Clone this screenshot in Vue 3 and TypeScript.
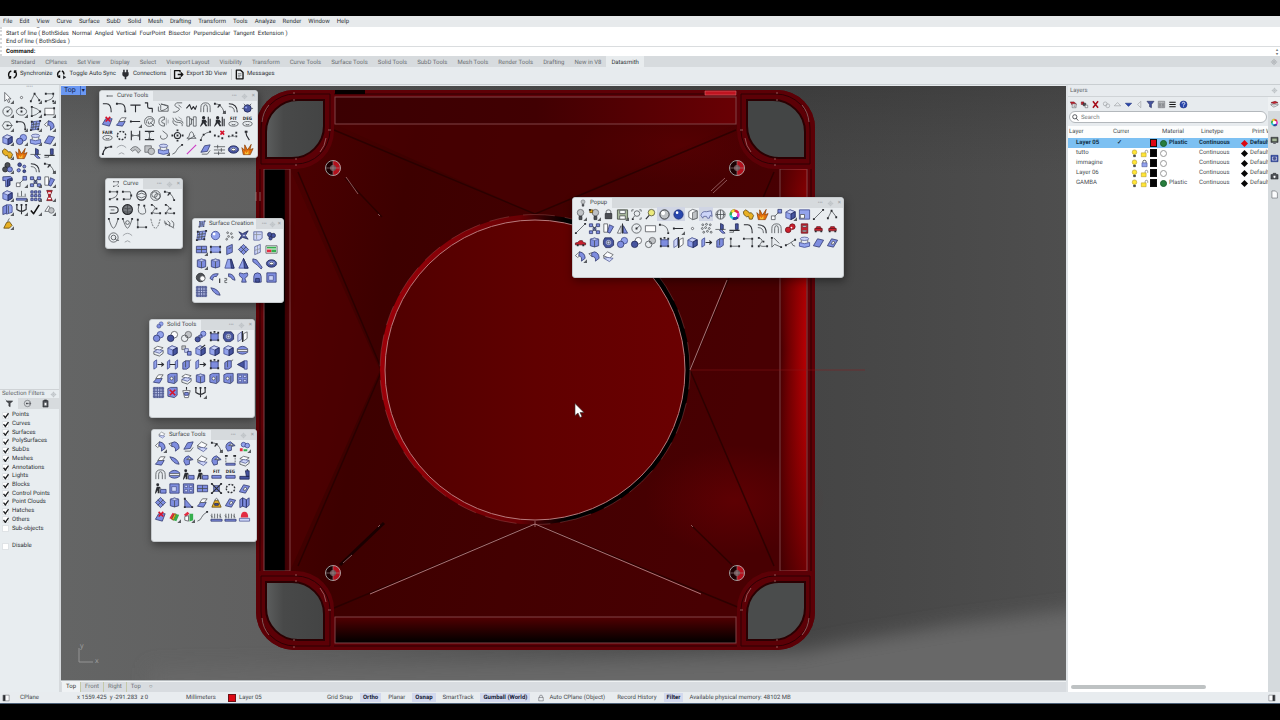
<script setup lang="ts">
import { ref } from 'vue'

interface Part { kind: string; d: string }
interface ToolWindow { id: string; title: string; glyph: string; tools: string[] }
interface Layer { name: string; current: boolean; locked: boolean; color: string; material: string }

const c = (x: number, y: number, r: number): string =>
  `M${x - r} ${y}a${r} ${r} 0 1 0 ${2 * r} 0a${r} ${r} 0 1 0 ${-2 * r} 0`
const dots = (...p: number[]): string => {
  let out = ''
  for (let i = 0; i < p.length; i += 2) out += `M${p[i] - 1} ${p[i + 1] - 1}h2v2h-2z`
  return out
}
const cube = 's:M2 4.5L6.5 2L12 4V10L7.5 12.5L2 10.5Z|l:M2 4.5L6.5 2L12 4L7.5 6.5Z|d:M7.5 6.5L12 4V10L7.5 12.5Z'

// Each glyph is a list of "kind:path" parts on a 14 unit square.
const glyphs: Record<string, string> = {
  arrow: 'w:M4 1.5V11L6.2 9L8 12.5L9.5 11.8L8 8.5H10.8Z',
  point: `w:${c(7, 7, 1.2)}`,
  zig: `k:M2 11L6 3L11 9.5|f:${dots(2, 11, 6, 3, 11, 10)}`,
  cpts: `k:M3 3H10Q12 3 11 6T6 10L3 11|f:${dots(3, 3, 11, 3, 3, 11, 11, 11)}`,
  circle: `k:${c(7, 7, 5)}M7 7L10.5 4|f:${dots(7, 7)}`,
  ellipse: `k:M1.5 7a5.5 4 0 1 0 11 0a5.5 4 0 1 0-11 0|f:${dots(7, 7, 7, 3)}`,
  arc3: `k:M3 2Q10 4 12 7Q8 11 3 12Z|f:${dots(3, 2, 12, 7, 3, 12)}`,
  rect: `w:M2 3.5H12V10.5H2Z|f:${dots(2, 10.5, 12, 3.5)}`,
  polygon: `k:M4 3H9L12 7L9 11H4L1.5 7ZM7 7H12|f:${dots(7, 7)}`,
  fillet: 'h:M2 3H6Q11 3 11 12',
  filletn: `h:M2 3H6Q11 3 11 10|f:${dots(2, 3, 11, 11)}`,
  tee: 'h:M1.5 4.5H12.5M7 4.5V12',
  step: 'h:M2 2H5V6Q5 8 7 8H10V12.5',
  loop: 'k:M2 3Q5 4 4 8T9 9T7 4T12 5M1.5 6V11H12V5',
  scurve: 'k:M12 2H6Q2 5 7 7T5 12H2M8 4L11 7',
  zag: 'h:M1.5 8L5 4L7 9L9 6L11 9L12.5 5',
  arch: 'k:M2 12V7Q2 2 7 2T12 7V12M5 12V7Q5 4 7 4T9 7V12',
  arcn: `k:M2 3Q9 3 12 12|f:${dots(2, 3, 7, 4.5, 12, 12)}|h:M5 7L8 4`,
  offset: 'h:M2 3Q11 3 11 12|k:M2 6Q8 6 8 12',
  bug: `d:${c(7, 8, 4)}|s:${c(5.5, 7, 1.6)}|k:M3 3L5 5M11 3L9 5M1 8H3M11 8H13`,
  surfx: 'b:M1.5 10L5 4H12L9 12Z|rh:M5 2L10 7M10 2L5 7',
  surf2: 'b:M1.5 11L5 7H11L8 12Z|w:M4 7L7 3H12L9 7Z',
  plane: 'b:M1.5 10.5L6 3L12.5 4.5L8 12Z',
  planeh: 'b:M1.5 10.5L6 3L12.5 4.5L8 12Z|w:M5.5 8.5L7.5 5.5L9.5 6.5L8 9Z',
  lineh: `h:M2 7H12|f:${dots(2, 7)}`,
  swirl: `k:${c(7, 7, 5.3)}M4 9Q3 4 8 4T9 8T6 7M8 8L12 12`,
  halfd: 'k:M8 2Q2 2 2 7T8 12V9Q5 9 5 7T8 5Z|g:M10 3V11M12 5V9',
  coil: 'k:M2 3Q3 8 8 8T12 12M5 3Q5 6 9 6T13 9M2 6Q2 11 7 11|g:M8 2L12 5',
  brk: 'k:M5 2H2V12H5ZM5 4H7V10H5M12 2H9V12H12ZM9 5H7',
  run: `f:${c(5, 3, 1.8)}M3 5H7L9 8H7L9 12H7L5 9L2 12.5H1L3 8Z|h:M10 2V12M12 4V12`,
  fit: 't:FIT|k:M2 9.5a5 2.5 0 1 0 10 0a5 2.5 0 1 0-10 0M5 9.5a2 1 0 1 0 4 0',
  deg: 't:DEG|k:M2 9.5a5 2.5 0 1 0 10 0a5 2.5 0 1 0-10 0M5 9.5a2 1 0 1 0 4 0',
  fair: 't:FAIR|k:M2 9.5a5 2.5 0 1 0 10 0a5 2.5 0 1 0-10 0M5 9.5a2 1 0 1 0 4 0',
  fitb: 't:FIT|b:M2 8H12V11H2Z',
  degb: 't:DEG|b:M2 8H12V11H2Z',
  ring: `hd:${c(7, 7, 4.5)}`,
  hh: 'h:M2.5 2V12M11.5 2V12|k:M3 7H11M4.5 5.5L3 7L4.5 8.5M9.5 5.5L11 7L9.5 8.5',
  ii: 'h:M2 2.5H12M2 11.5H12|k:M7 3V11M5.5 4.5L7 3L8.5 4.5M5.5 9.5L7 11L8.5 9.5',
  hook: 'k:M6 2L11 6Q12 10 7 11Q3 11 4 7',
  target: `h:${c(7, 7, 3.3)}|f:${dots(7, 7, 7, 1.5, 7, 12.5, 1.5, 7, 12.5, 7)}`,
  bell: 'k:M2 10Q5 9 5 5Q7 1 9 5Q9 9 12 10ZM3 12L11 7',
  ncurve: `k:M2 12Q3 5 12 3|f:${dots(2, 12, 5, 6, 12, 3)}`,
  redx: `rh:M8 2L12 6M12 2L8 6|f:${dots(2, 7, 6, 8, 10, 10)}`,
  ndots: `f:${dots(2, 8, 6, 7, 10, 8, 10, 4)}|g:M2 8L10 8`,
  ess: 'h:M5 2L6 7L9 12|f:M4 2h3v2h-3z',
  arcn2: `h:M2 12Q3 4 11 4|f:${dots(2, 12, 5, 5, 11, 4)}`,
  garc: 'g:M2 5Q7 0 12 5M4 12Q7 9 10 12',
  fan: 'gf:M1.5 7Q7 0 12.5 8L10 11Q7 5 4 9Z',
  shapes: `gf:M2 3H9V10H2Z|gf:${c(9, 9, 3.5)}`,
  cyl: 'l:M2.5 3a4.5 1.8 0 1 0 9 0a4.5 1.8 0 1 0-9 0|s:M1.5 7Q7 9.5 12.5 7V11Q7 13.5 1.5 11Z|k:M3.5 4.5V7M10.5 4.5V7',
  curve: 'k:M1.5 12Q5 11 6 8T12 2|f:M11 1h2v2h-2z',
  mline: 'm:M2 12L12 2',
  surfp: 'b:M2 10L6 3L12 2L9 9Z|k:M3 12H9L12 8',
  lines: 'k:M1 4H13M1 7.5H13M1 11H13M5 2V6M9 5.5V9.5M6 9V13',
  torus: 'd:M1.5 7a5.5 4 0 1 0 11 0a5.5 4 0 1 0-11 0|s:M3 6.5a4 2.4 0 1 0 8 0a4 2.4 0 1 0-8 0|w:M4.8 7a2.2 1.3 0 1 0 4.4 0a2.2 1.3 0 1 0-4.4 0',
  fire: 'o:M2.5 12.5L1 5L4 8L4 2L7 7.5L11 1.5L9.5 7.5L13 6L10 12.5Z|ya:M4.5 12L4.5 9L6 11L8 8L8 12Z',
  rtop: `k:M2 3H10Q12 7 10 11H3|f:${dots(2, 3, 3, 11, 11, 7)}`,
  cring: `h:${c(7, 7, 5)}|k:M3 6Q7 3 11 6M3 8Q7 11 11 8`,
  grings: `k:${c(7, 7, 5.3)}${c(6, 6, 3)}${c(9, 8, 3)}`,
  sphdk: `gm:${c(7, 7, 5.3)}|k:M2 5Q7 8 12 5M2 9Q7 11 12 9M7 2V12`,
  opend: 'h:M2 4H8Q12 4 12 7.5T8 11H3|k:M4 7.5H8',
  copen: 'k:M4 3Q2 12 8 12T10 4|f:M3 1h2v2h-2zM9 2h2v2h-2z',
  zign: `k:M3 2Q9 4 5 8T12 11|f:${dots(3, 2, 8, 6, 3, 11, 12, 11)}`,
  vee: `k:M2 2Q5 12 7 12T12 2|f:${dots(2, 2, 12, 2)}`,
  veec: `k:M2 2Q5 12 7 12T12 2${c(7, 6, 2)}|f:${dots(2, 2, 12, 2)}`,
  ell: `k:M3 2V11H12|f:${dots(3, 11, 12, 11, 3, 3)}`,
  udash: 'kd:M2 2Q4 12 7 12T12 2',
  spring: 'k:M1 4Q5 6 3 9M5 4Q9 6 7 10M9 4Q13 6 11 11M1 6L12 12',
  spiral: `k:${c(7, 7, 5)}${c(7, 7, 2.5)}M9 7Q9 11 13 10`,
  patch: `s:M3 3L12 2L10 11L2 12Z|k:M5 3L4 12M8 3L7 11M3 6L11 5M2 9L11 8|f:${dots(2, 12, 12, 2, 3, 3, 10, 11)}`,
  ball: `s:${c(7, 7, 4.5)}|wf:${c(5.5, 5.5, 1.5)}`,
  scatter: `gf:${c(5, 4, 1)}${c(9, 5, 1)}${c(6, 8, 1)}${c(10, 9, 1)}${c(4, 11, 1)}`,
  mesh: 'd:M2 3L6 5L12 2L9 7L12 11L6 9L2 12L5 7Z|l:M6 6H9V8H6Z',
  lgrid: 'l:M3 3H12V10L9 12H3Z|g:M3 6H11M6 3V11',
  blobs: `d:${c(5, 6, 2.3)}|d:${c(9, 7, 2.3)}|d:${c(6, 10, 1.8)}`,
  pl: 'b:M1.5 3.5H12.5V10.5H1.5Z|k:M1.5 7H12.5M7 3.5V10.5',
  pln: `s:M2 4H12V10H2Z|f:${dots(2, 4, 12, 4, 2, 10, 12, 10)}`,
  page: 'b:M4 4L10 1.5V10L4 12.5Z|k:M6 6L9 5',
  diam: 'b:M7 1.5L12.5 7L7 12.5L1.5 7Z|k:M4 4L10 10M10 4L4 10',
  lpage: 'l:M4 4L10 1.5V10L4 12.5Z|g:M7 3V12M4 8L10 6',
  pic: 'w:M1 3H13V11H1Z|r:M2 7H7V10H2Z|n:M2 4H12V6H2ZM7 7H12V10H7Z',
  box: cube,
  cylb: 'b:M2.5 3.5Q7 1 11.5 3.5V10.5Q7 13 2.5 10.5Z|l:M2.5 3.5Q7 6 11.5 3.5Q7 1 2.5 3.5Z|k:M7 5V12',
  frus: 's:M5 2.5H9L12 12H2Z|d:M8 2.5H9L12 12H9Z',
  cone: 's:M7 1.5L12 12H2Z|d:M7 1.5L12 12H8Z',
  pipe: 'b:M2 2L6 3L12 11L11 13L7 9L2 5Z',
  tord: `gd:${c(6, 7, 4.6)}|w:${c(8, 8, 2.8)}`,
  sw1: 'b:M1 8Q3 2 10 3L8 6Q4 5 4 10Z|h:M11.5 8V13',
  sw2: 'b:M6 3Q12 3 13 10L10 9Q9 6 6 6Z|k:M1.5 8H4V10H2V12.5H4.5',
  vase: 'b:M3 2Q7 4 11 2Q13 5 8.5 8L10 12H5L6 8Q1 5 3 2Z',
  dome: 'b:M3 12V6Q3 2 7 2T11 6V12Z|d:M5 12V8H9V12Z',
  frame: 'b:M2 2H12V12H2Z|l:M4 5H9V10H4Z',
  hatch: 'l:M1.5 1.5H12.5V12.5H1.5Z|hb:M1 3H13M1 5.7H13M1 8.4H13M1 11H13M3 1V13M5.7 1V13M8.4 1V13M11 1V13',
  leaf: 'b:M2 3Q10 4 12 11Q6 11 2 3Z',
  union: `s:${c(9, 5, 3.5)}|b:${c(5, 9, 3.5)}`,
  diff: `w:${c(9, 5, 3.5)}|d:${c(5, 9, 3.5)}`,
  inter: `gf:${c(9, 5, 3.5)}|k:${c(5, 9, 3.5)}`,
  split: `s:${c(10, 4, 2.8)}|d:${c(4, 10, 2.8)}|b:M5 6L8 5L9 8L6 9Z`,
  rbox: `d:M3 2H10L12.5 5V10L9 12.5H4L1.5 9V5Z|l:${c(7, 7, 3)}|k:${c(7, 7, 1.5)}`,
  mir: 'l:M2 5L6 2V10L2 12.5Z|w:M8 4L12 2V9L8 12Z|h:M7 1V13',
  slabs: 'w:M2 5L6 2.5L12 4L8 7Z|l:M2 8L6 6L12 7L8 10Z|k:M2 8V11L8 13L12 10V7',
  cubes: 'gf:M2 2H6V6H2Z|l:M5 5H9V9H5Z|b:M8 8H12V12H8Z',
  boxa: cube + '|h:M7 5L12 1',
  disc: 'b:M1.5 5Q7 0 12.5 5V9Q7 13 1.5 9Z|w:M1.5 6H12.5V8H1.5Z',
  ext: 's:M2 4L5 2V10L2 12Z|h:M6 7H12.5M10 5L12.5 7L10 9',
  ext2: 's:M1.5 4L4 2V10L1.5 12Z|s:M10 4L12.5 2V10L10 12Z|h:M4 7H10',
  ext3: 'b:M3 5L6 3H10V10L7 12H3Z|k:M6 3V10M10 3L12 2',
  boxn: `b:M3 4H11V11H3Z|f:${dots(3, 3, 11, 3, 3, 11, 11, 11, 7, 2)}`,
  cut: 'd:M1.5 7L9 3V11Z|s:M9 3H12V12H9Z',
  hole: `b:M2 3L5 1.5H12V10L9 12.5L2 11Z|w:${c(6, 7, 1.6)}|k:M9.5 4V12`,
  fr2: 'b:M1.5 2H12.5V12H1.5Z|l:M3 3.5H6V6H3ZM8 3.5H11V6H8ZM3 8H6V10.5H3ZM8 8H11V10.5H8Z',
  boxx: 'b:M2 3L5 1.5H12V10L9 12.5L2 11Z|rh:M4 4L10 10M10 4L4 10',
  cup: 'w:M3 5H11L9 12.5H5Z|h:M7 1V4|b:M5 7H9V10H5Z',
  branch: 'h:M7 2V12M2 3V7Q5 9 7 9M12 3V7Q9 9 7 9|f:M1 1h2v2h-2zM6 1h2v2h-2zM11 1h2v2h-2z',
  bend: 'w:M1.5 6L6 2L9 4L4 8Z|b:M6 2Q12 3 12 9L8 12Q9 7 5 6Z',
  bend2: 'b:M4 3L7 2Q12 3 12 9L8 12Q9 7 4 7Z|k:M1 4L4 3M1 4L4 7',
  bend3: 'w:M1.5 6L6 2L12 5L8 9Z|l:M2 9L6 8L12 9L8 12.5Z|k:M2 6V9',
  bend4: 'b:M2 8Q2 3 7 2L12 6L8 7L8 11L4 12Z|w:M5 6L8 4L10 6Z',
  rgblob: `s:${c(6, 5, 2.5)}|s:${c(10, 6, 2.5)}|r:M2 9H5V12H2Z|n:M6 10H10V12H6Z`,
  gate: 'b:M2 10H12V12H2Z|kd:M2 9V2M12 9V2|f:M1 1h3v2h-3zM10 1h3v2h-3z',
  runb: `f:${c(4, 3, 1.6)}M3 5H6L8 7H6L6 12H4L4 9L2 12.5H1L2 8Z|b:M7 8H13V12H7Z`,
  tbl: 'h:M10 1V5|d:M2 9H12V12H2ZM8 3H12V9H9Z',
  xn: `b:M4 4H10V10H4Z|h:M2 2L12 12M12 2L2 12|f:${dots(2, 2, 12, 2, 2, 12, 12, 12)}`,
  tri: 'b:M3 3L11 12H3Z|f:M2 2h2v2h-2zM2 11h2v2h-2zM10 11h2v2h-2z',
  lampb: 'y:M2 12L5 5H9L12 12Z|k:M5 5Q7 0 9 5|d:M5 8H9V10H5Z',
  fold: 'b:M2 4L5 2V11L2 12.5ZM5 2L9 4V12.5L5 11ZM9 4L12 2V10L9 12.5Z',
  rain: 'r:M1.5 9L5 3L7 4L4 10Z|y:M4 10L7 4L9 4.5L6 11Z|n:M6 11L9 4.5L12 5L9 12Z',
  rgbox: 'r:M2 5L6 2L8 4L4 7Z|n:M8 4H12V11L8 12.5Z|w:M3 7L7 6V12L3 11Z',
  comb: 'b:M1 10H13V12H1Z|k:M2 4V9M5 4V9M8 4V9M11 4V9M1 6L3 8M10 6L12 8',
  sun: 'r:M3 8Q3 2 7 2T11 8Z|l:M1.5 9H12.5V12H1.5Z',
  puzzle: 'y:M1.5 4L4 2L7 4L8 5.5L10 5L12.5 8L11 12H8L7 9L5 9.5L2 7Z',
  trim: 'd:M7 1.5L10 3V8H7Z|k:M1.5 8H12.5|b:M8 8L12 12H9L6 9Z',
  trim2: 'd:M8 2H11V8H8Z|h:M1.5 9H12.5|k:M1.5 11H6V9',
  venn: `gd:${c(7, 4.5, 2.8)}|gd:${c(4.5, 9, 2.8)}|b:${c(9.5, 9, 2.8)}`,
  bdots: `d:${c(5, 4, 2)}|b:${c(10, 6, 1.6)}|b:${c(4, 10, 1.8)}|d:${c(10, 11, 1.6)}`,
  tt: 'b:M2 2L10 1.5L12 3V6H9.5V11L7 12.5H5V6H2Z|d:M9.5 4H12V6H9.5V11L7 12.5V5Z',
  scale: 'w:M1.5 8.5H5.5V12.5H1.5Z|b:M8.5 1.5H12.5V5.5H8.5Z|k:M5 9L9 5',
  clus: 'b:M1.5 2H5V5H1.5ZM9 2H12.5V5H9ZM5.5 6H8.5V9H5.5ZM1.5 9.5H5V12.5H1.5ZM9 9.5H12.5V12.5H9Z|k:M5 4L9 10M9 4L5 10',
  pages: 'w:M2 2H6V11H2Z|b:M8 3L12.5 5L8.5 12L6 11Z',
  align: 'b:M1.5 10H12.5V12H1.5Z|k:M3 8V4M7 8V2M11 8V5|g:M2 8H12',
  arr: 'b:M2 2h2.5v2.5h-2.5zM6 2h2.5v2.5h-2.5zM10 2h2.5v2.5h-2.5zM2 6h2.5v2.5h-2.5zM6 6h2.5v2.5h-2.5zM10 6h2.5v2.5h-2.5zM2 10h2.5v2.5h-2.5zM6 10h2.5v2.5h-2.5zM10 10h2.5v2.5h-2.5z',
  hour: 'rd:M4 1.5H10L8 6.5V8L10 12.5H4L6 8V6.5Z|wf:M5.5 3.5H8.5V5H5.5ZM5.5 9.5H8.5V11H5.5Z',
  book: 'b:M2 4L6 2V11L2 12.5Z|s:M6 2H11L12 4V10L6 12Z|k:M8 3V11',
  check: 'hk:M2 8L5 11.5L11 2',
  cones: `w:M6 3L10 9H2Z|gf:${c(9, 8, 3)}`,
  gbell: 'y:M3 12L6 6L9 5L12 9L9 12Z|k:M7 5L9 1.5',
  bulb: `gf:${c(7, 5, 3.5)}|gd:M5.5 9H8.5V12.5H5.5Z`,
  bulby: `gf:${c(8, 5, 3.5)}|gd:M6.5 9H9.5V12.5H6.5Z|y:M2 2H5V5H2Z|f:M1 1h2v2h-2z`,
  ybulb: `yb:${c(7, 5, 3.6)}|gd:M5.5 9.5H8.5V12H5.5Z`,
  lock: 'k:M4.5 6V4Q4.5 2 7 2T9.5 4V6|gd:M3.5 6H10.5V11.5H3.5Z',
  olock: 'k:M4.5 6V4Q4.5 2 7 2T9.5 4V6M3 6H11V12H3Z',
  block: 'h:M4.5 6V4Q4.5 2 7 2T9.5 4V6|s:M3 6H11V12H3Z',
  unlock: 'k:M8 6V4Q8 2 10 2T12 4V6|yb:M2 6H9.5V12H2Z',
  save: 'sg:M1.5 2H12.5V12H1.5Z|w:M4 2.5H10V6H4ZM4 8.5H10V12H4Z',
  zext: `k:${c(7.5, 6, 3)}M5 8.5L3 11M2 4V2H4M10 2H12V4M12 10V12H10|f:${dots(3, 12)}`,
  zoom: `yl:${c(8, 5, 3.5)}|h:M5.5 8L2 12`,
  gsph: `gf:${c(7, 7, 5)}|wf:${c(5.5, 5.5, 2.2)}|k:${c(7, 7, 5)}`,
  bsph: `dn:${c(7, 7, 5)}|wf:${c(5.5, 5, 1.4)}`,
  ghost: 'w:M3 4L7 1.5L12 3V11L7 12.5L3 10Z|gf:M7 5L12 3V11L7 12.5Z',
  whale: 'l:M1 8Q2 3 7 4L12 3L13 9L11 8L10 11H8L7 9H4L3 11Z',
  globe: `k:${c(7, 7, 5)}M2 7H12M7 2V12M4.5 3Q2.5 7 4.5 11M9.5 3Q11.5 7 9.5 11`,
  wheel: 'r:M7 1.5A5.5 5.5 0 0 1 12 5L7 7Z|m2:M12 5A5.5 5.5 0 0 1 11 11L7 7Z|dn:M11 11A5.5 5.5 0 0 1 5 12L7 7Z|cy:M5 12A5.5 5.5 0 0 1 1.5 8L7 7Z|n:M1.5 8A5.5 5.5 0 0 1 3 3.5L7 7Z|yb:M3 3.5A5.5 5.5 0 0 1 7 1.5L7 7Z|wf:' + c(7, 7, 2.8),
  sframe: 's:M1.5 2H12.5V12H1.5Z|w:M2.5 7H7V11H2.5Z',
  line: `k:M2 12L12 2|f:${dots(2, 12, 12, 2)}`,
  mirr: 'w:M1.5 12L5.5 4V12Z|b:M8 4L12.5 12H8Z|h:M7 1.5V12.5',
  rects: 'w:M1.5 4H12.5V10.5H1.5Z',
  arcs: `k:M2 3Q10 3 11 11|f:${dots(2, 3, 11, 12)}`,
  cloud: 'k:' + c(3, 3, 1) + c(7, 2.5, 1) + c(11, 3, 1) + c(2.5, 7, 1) + c(6, 6, 1) + c(10, 7, 1) + c(4, 11, 1) + c(8, 10, 1) + c(12, 11, 1),
  rblob: `rd:${c(9, 5, 3)}|rd:${c(4.5, 8.5, 3)}|wf:${c(8, 6, 1)}`,
  rcan: 'rd:M3.5 2H10.5V12H3.5Z|w:M5 4H9V5.5H5ZM5 9H9V10.5H5Z',
  car: 'rd:M5 5H9L10 7H4Z|rd:M3 7H11V9.5H3Z|f:M3 9.5h2v1.5h-2zM9 9.5h2v1.5h-2z',
  car2: 'rd:M1.5 7.5L4 7L6 5H9L10 7L12.5 7.5V9.5H1.5Z|f:M3 9h2v2h-2zM9 9h2v2h-2z',
  curb: `k:M2 2V12L5 9L12 12M4 2L10 8|f:${dots(2, 2, 12, 12)}`,
  tee3: `k:M2 10L6 8L12 4M8 7Q9 11 12 11|f:${dots(2, 10, 12, 4)}`,
  stepn: `k:M2 3H11V11|f:${dots(2, 3, 11, 3, 11, 11)}`,
  newl: 'rd:M2 3H8L11 6V8H5Z|w:M5 6H11V12H5Z|k:M7 8H10M7 10H10',
  newl2: 'rd:M2 3H6V7H2Z|gd:M5 5H9V9H5Z|w:M8 8H12V12H8Z',
  xx: 'rb:M3 2L11 12M11 2L3 12',
  gcopy: `g:${c(5, 6, 3)}${c(9, 9, 3)}`,
  up: 'g:M2 9H12L7 4Z',
  down: 'dn:M2 5H12L7 10Z',
  left: 'g:M9 2V12L4 7Z',
  funnel: 'd:M1.5 2H12.5L8.5 7V12L5.5 10.5V7Z',
  table: 'gf:M2 2H12V12H2Z|w:M3.5 5H6V7H3.5ZM8 5H10.5V7H8ZM3.5 8.5H6V10.5H3.5ZM8 8.5H10.5V10.5H8Z',
  menu: 'hk:M2 3.5H12M2 7H12M2 10.5H12',
  help: `dn:${c(7, 7, 5.5)}|wl:M5 5.5Q5 3.5 7 3.5T9 5.5Q9 7 7 7.5V8.5M7 10V11`,
  layers: 'rd:M1.5 4L8 2L12.5 4L6 6Z|w:M1.5 6L6 8L12.5 6V8L6 11L1.5 8Z',
  monitor: 'gd:M1.5 2H12.5V10H1.5Z|sg:M3 3.5H11V8.5H3Z|f:M5 11h4v1h-4z',
  panel: 'dn:M1.5 2H12.5V12H1.5Z|l:M3 4H11V10.5H3Z|d:' + c(7, 7, 2),
  camera: `gd:M1.5 4H4L5 2H9L10 4H12.5V11H1.5Z|w:${c(7, 7.5, 2.2)}`,
  doc: 'w:M3 1.5H8.5L11.5 4.5V12.5H3Z',
  side: 'w:M1.5 2H12.5V12H1.5Z|f:M2 2h4v10h-4z',
  sideR: 'w:M1.5 2H12.5V12H1.5Z|f:M8 2h4v10h-4z',
  sync: 'hk:M5.5 2.5Q2 4 2 7.5Q2 9.5 4 11M2 11.5H4.5V9M8.5 11.5Q12 10 12 6.5Q12 4.5 10 3M12 2.5H9.5V5',
  auto: 'hk:M5.5 2.5Q2 4 2 7Q2 9.5 4 10.5M4.5 8V11.5M7.5 2.5Q10.5 4 10 7|f:M9 8l4 2.5l-4 2.5z',
  plug: 'f:M4 1h2v3h2v-3h2v3h1v4l-2 2h-1v3h-2v-3h-1l-2-2v-4h1z',
  exp: 'hk:M9 4V2H2V12H9V10M6 7H12.5M10 4.5L12.5 7L10 9.5',
  msg: 'hk:M3 1.5H8.5L11.5 4.5V12.5H3Z|k:M5 6H9.5M5 8H9.5M5 10H8',
  gear: `g:${c(7, 7, 3.5)}${c(7, 7, 1.3)}M7 1.5V3M7 11V12.5M1.5 7H3M11 7H12.5`,
  flt: 'gd:M2 3H12L8 7V12L6 11V7Z|k:M1 1L3 3',
  plus: `k:${c(7, 7, 5)}M5 7H12M9 5L12 7L9 9|f:${dots(6, 7)}`,
  clip: 'gd:M3 2.5H11V12.5H3Z|w:M5 5.5H9V10.5H5Z|f:M5 1h4v2h-4z'
}

const parts = (name: string): Part[] => {
  const marked = name.endsWith('+')
  const source = glyphs[marked ? name.slice(0, -1) : name] ?? ''
  const list = source.split('|').map((s) => {
    const at = s.indexOf(':')
    return { kind: s.slice(0, at), d: s.slice(at + 1) }
  })
  if (marked) list.push({ kind: 'more', d: 'M14 14h-4l4-4z' })
  return list
}

const row = (s: string): string[] => s.trim().split(/\s+/)

const menus = ['File', 'Edit', 'View', 'Curve', 'Surface', 'SubD', 'Solid', 'Mesh', 'Drafting', 'Transform', 'Tools', 'Analyze', 'Render', 'Window', 'Help']
const tabs = ['Standard', 'CPlanes', 'Set View', 'Display', 'Select', 'Viewport Layout', 'Visibility', 'Transform', 'Curve Tools', 'Surface Tools', 'Solid Tools', 'SubD Tools', 'Mesh Tools', 'Render Tools', 'Drafting', 'New in V8', 'Datasmith']
const activeTab = ref('Datasmith')
const actions = [
  { label: 'Synchronize', glyph: 'sync', sep: false },
  { label: 'Toggle Auto Sync', glyph: 'auto', sep: false },
  { label: 'Connections', glyph: 'plug', sep: true },
  { label: 'Export 3D View', glyph: 'exp', sep: true },
  { label: 'Messages', glyph: 'msg', sep: false }
]

const palette = row(`arrow+ point zig+ cpts+ circle+ ellipse+ arc3+ rect+ polygon+ filletn+ patch+ bend+
  box+ union+ cyl+ plane+ puzzle+ fire trim trim2 venn+ bdots offset arcn+ tt scale+ clus+ pages+
  box+ align+ arr+ hour+ book+ branch+ check+ cones+ gbell+`)

const windows: ToolWindow[] = [
  { id: 'curve-tools', title: 'Curve Tools', glyph: 'lineh', tools: row(`fillet filletn tee step loop scurve zag arch arcn+ offset bug
    surfx surf2 lineh+ swirl halfd coil brk run run fit deg
    fair ring hh ii hook target bell ncurve redx ndots ess
    arcn2 garc fan shapes cyl+ curve mline surfp lines torus fire`) },
  { id: 'curve', title: 'Curve', glyph: 'cpts', tools: row(`cpts rtop cring grings arcn opend sphdk copen zign zign
    vee veec ell udash spring spiral garc`) },
  { id: 'surface-creation', title: 'Surface Creation', glyph: 'patch', tools: row(`patch ball scatter mesh lgrid blobs
    pl+ pln page diam lpage pic cylb+ cylb frus cone pipe torus tord sw1 sw2 vase dome frame hatch leaf`) },
  { id: 'solid-tools', title: 'Solid Tools', glyph: 'union', tools: row(`union diff inter split boxn rbox mir
    slabs box cubes boxa box box disc ext ext2 ext3 ext boxn ext3 cut
    surf2 hole slabs cylb hole hole fr2 hatch boxx cup branch+`) },
  { id: 'surface-tools', title: 'Surface Tools', glyph: 'bend3', tools: row(`bend+ bend2 surfp bend3 arcn+ bend4 rgblob+
    surf2 leaf bend4 bend3 bend4 gate slabs arch disc runb runb fitb degb tbl
    runb frame fr2 pl xn ring planeh diam cylb tri surf2 lampb planeh fold
    surfx rain+ rgbox+ curve comb comb sun`) },
  { id: 'popup', title: 'Popup', glyph: 'bulb', tools: row(`bulb+ bulby+ lock save+ zext zoom gsph bsph ghost whale globe wheel puzzle fire scale box+ sframe line zig
    line clus pages mirr circle rects arcs lineh+ point cloud trim trim2 fillet offset arch rblob rcan car car
    car2 cylb rbox union diff inter boxn mir box ext ext3 ell stepn zign curb tee3 cyl plane planeh
    bend+ bend2 bend3`) }
]

const filters = ref(['Points', 'Curves', 'Surfaces', 'PolySurfaces', 'SubDs', 'Meshes', 'Annotations', 'Lights', 'Blocks', 'Control Points', 'Point Clouds', 'Hatches', 'Others', 'Sub-objects']
  .map((label) => ({ label, on: label !== 'Sub-objects' })))
const disabled = ref(false)

const layerTools = row('newl newl2 xx gcopy up down left funnel table menu help')
const sideTools = row('layers wheel monitor panel camera doc')
const layers: Layer[] = [
  { name: 'Layer 05', current: true, locked: false, color: 'red', material: 'Plastic' },
  { name: 'tutto', current: false, locked: false, color: 'black', material: '' },
  { name: 'immagine', current: false, locked: true, color: 'black', material: '' },
  { name: 'Layer 06', current: false, locked: false, color: 'black', material: '' },
  { name: 'GAMBA', current: false, locked: false, color: 'black', material: 'Plastic' }
]
const views = ['Top', 'Front', 'Right', 'Top']
const search = ref('')
const command = ref('')

const Glyph = (props: { name: string }) => {
  return h('svg', { viewBox: '0 0 14 14', class: 'glyph', 'aria-hidden': 'true' }, parts(props.name).map((p) =>
    p.kind === 't'
      ? h('text', { x: 7, y: 5.5, class: 'gt' }, p.d)
      : h('path', { d: p.d, class: 'g-' + p.kind })))
}
Glyph.props = ['name']
</script>

<script lang="ts">
import { h } from 'vue'
</script>

<template>
  <div class="app">
    <nav class="menubar" aria-label="Main menu">
      <button v-for="m in menus" :key="m" type="button">{{ m }}</button>
    </nav>

    <section class="command">
      <div class="log">
        <p>Command: _Line</p>
        <p>Start of line ( BothSides&nbsp; Normal&nbsp; Angled&nbsp; Vertical&nbsp; FourPoint&nbsp; Bisector&nbsp; Perpendicular&nbsp; Tangent&nbsp; Extension )</p>
        <p>End of line ( BothSides )</p>
      </div>
      <div class="prompt">
        <label for="command">Command:</label>
        <input id="command" v-model="command" type="text">
        <span class="spin">▴<br>▾</span>
      </div>
    </section>

    <nav class="tabs" aria-label="Toolbars">
      <button v-for="t in tabs" :key="t" type="button" :class="{ on: t === activeTab }" @click="activeTab = t">{{ t }}</button>
      <span class="grow"></span>
      <Glyph name="gear" />
    </nav>

    <div class="actions">
      <button v-for="a in actions" :key="a.label" type="button" :class="{ sep: a.sep }">
        <Glyph :name="a.glyph" /><span>{{ a.label }}</span>
      </button>
    </div>

    <main class="work">
      <aside class="left">
        <div class="grip">••••</div>
        <div class="palette">
          <button v-for="(t, i) in palette" :key="i" type="button" :aria-label="t"><Glyph :name="t" /></button>
        </div>
        <section class="filters">
          <header><h2>Selection Filters</h2><Glyph name="gear" /></header>
          <div class="ftabs">
            <button type="button" class="on" aria-label="Filter"><Glyph name="flt" /></button>
            <button type="button" aria-label="Snap"><Glyph name="plus" /></button>
            <button type="button" aria-label="Clipboard"><Glyph name="clip" /></button>
          </div>
          <div class="flist">
            <label v-for="f in filters" :key="f.label"><input v-model="f.on" type="checkbox">{{ f.label }}</label>
          </div>
          <label class="disable"><input v-model="disabled" type="checkbox">Disable</label>
        </section>
      </aside>

      <section class="center">
        <div class="viewport">
          <svg class="scene" viewBox="61 86 1005 594" preserveAspectRatio="xMinYMin slice" role="img" aria-label="Model view">
            <defs>
              <linearGradient id="bg"><stop offset="0" stop-color="#646565" /><stop offset=".2" stop-color="#606060" /><stop offset=".74" stop-color="#454545" /><stop offset=".84" stop-color="#484848" /><stop offset="1" stop-color="#4e4e4e" /></linearGradient>
              <linearGradient id="topshade" x2="0" y2="1"><stop offset="0" stop-color="#222" stop-opacity=".25" /><stop offset="1" stop-color="#333" stop-opacity="0" /></linearGradient>
              <linearGradient id="plate" x2="1" y2=".2"><stop offset="0" stop-color="#4c0001" /><stop offset=".25" stop-color="#3d0000" /><stop offset=".6" stop-color="#430001" /><stop offset="1" stop-color="#480002" /></linearGradient>
              <linearGradient id="disk"><stop offset="0" stop-color="#500000" /><stop offset=".5" stop-color="#600000" /><stop offset="1" stop-color="#6a0001" /></linearGradient>
              <linearGradient id="rim"><stop offset="0" stop-color="#9c0008" /><stop offset=".45" stop-color="#690004" /><stop offset=".6" stop-color="#000" /><stop offset="1" stop-color="#000" /></linearGradient>
              <linearGradient id="rightbar"><stop offset="0" stop-color="#430001" /><stop offset=".3" stop-color="#6c0002" /><stop offset=".95" stop-color="#b50003" /><stop offset="1" stop-color="#700004" /></linearGradient>
              <linearGradient id="rightfade" x2="0" y2="1"><stop offset="0" stop-color="#500002" stop-opacity=".65" /><stop offset=".45" stop-color="#900" stop-opacity="0" /><stop offset="1" stop-color="#400002" stop-opacity=".6" /></linearGradient>
              <linearGradient id="topbar"><stop offset="0" stop-color="#3b0002" /><stop offset=".5" stop-color="#410002" /><stop offset="1" stop-color="#690004" /></linearGradient>
              <linearGradient id="botbar" x2="0" y2="1"><stop offset="0" stop-color="#520002" /><stop offset=".4" stop-color="#300001" /><stop offset="1" stop-color="#000" /></linearGradient>
              <linearGradient id="leftbar"><stop offset="0" stop-color="#000" /><stop offset=".78" stop-color="#000" /><stop offset=".82" stop-color="#3b0003" /><stop offset="1" stop-color="#4c0003" /></linearGradient>
              <linearGradient id="hole"><stop offset="0" stop-color="#5c5e5e" /><stop offset=".3" stop-color="#484949" /><stop offset="1" stop-color="#434444" /></linearGradient>
              <radialGradient id="gloss"><stop offset="0" stop-color="#7d0004" stop-opacity=".4" /><stop offset="1" stop-color="#7d0004" stop-opacity="0" /></radialGradient>
              <filter id="soft" x="-20%" y="-60%" width="140%" height="220%"><feGaussianBlur stdDeviation="9" /></filter>
              <g id="corner">
                <path d="M256 169V128A38 38 0 0 1 294 90H334V131A38 38 0 0 1 296 169Z" fill="#5c0006" />
                <path d="M261 164V129A34 34 0 0 1 295 94H330V131A34 34 0 0 1 296 164Z" class="seam" />
                <path d="M266 158V132A32 32 0 0 1 298 100H324V126A32 32 0 0 1 292 158Z" stroke="#2a0002" stroke-width="2" />
                <path d="M262 122Q263 112 269 105M326 138Q325 146 320 152M294 92V94M294 99V101M296 158V160M296 164V166M328 130H331" class="hint" />
              </g>
              <g id="screw">
                <circle r="8" fill="#1b0002" /><path d="M0-8A8 8 0 0 1 0 8Z" fill="#b3101c" />
                <circle r="7.500" fill="none" stroke="#a39a9a" stroke-width="1" /><circle r="3" fill="#6c5557" />
                <path d="M-7 0H7M0-7V7" stroke="#a38c8e" stroke-width=".6" />
              </g>
            </defs>
            <rect x="61" y="86" width="1005" height="594" fill="url(#bg)" />
            <rect x="61" y="86" width="1005" height="90" fill="url(#topshade)" />
            <path d="M150 668L560 660L800 652L850 642L950 625L1090 607V730H150Z" fill="#676868" filter="url(#soft)" />
            <rect x="256" y="90" width="559" height="560" rx="38" fill="#5e0006" />
            <rect x="260" y="94" width="551" height="552" rx="34" class="seam" />
            <path d="M290 169L334 124H736L780 169V571L736 617H334L290 571Z" fill="url(#plate)" />
            <path d="M334 124H736L535 214Z" fill="#4b0002" opacity=".55" />
            <path d="M290 169V571L380 370Z" fill="#590002" opacity=".45" />
            <ellipse cx="735" cy="500" rx="90" ry="55" fill="url(#gloss)" />
            <ellipse cx="680" cy="145" rx="100" ry="40" fill="url(#gloss)" opacity=".6" />
            <g class="crease">
              <path d="M334 130L535 214L736 130M298 172L382 370L298 566M334 608L535 524L740 608M774 172L690 370L774 566" />
              <path d="M345 178L382 217M692 526L732 565" />
            </g>
            <path d="M340 565L384 523" stroke="#1a0001" stroke-width="3" />
            <g class="edge">
              <rect x="335" y="97" width="401" height="27" fill="url(#topbar)" />
              <rect x="335" y="617" width="401" height="26" fill="url(#botbar)" />
              <rect x="264" y="169" width="26" height="402" fill="url(#leftbar)" />
              <rect x="780" y="169" width="27" height="402" fill="url(#rightbar)" />
            </g>
            <rect x="781" y="170" width="25" height="400" fill="url(#rightfade)" />
            <path d="M335 90h30v4h-30z" fill="#060000" /><path d="M705 91h31v4h-31z" fill="#c01420" stroke="#d4666b" stroke-width=".6" />
            <g fill="url(#hole)"><use href="#corner" /></g>
            <g fill="#434545"><use href="#corner" transform="matrix(-1 0 0 1 1071 0)" /></g>
            <g fill="url(#hole)"><use href="#corner" transform="matrix(1 0 0 -1 0 740)" /></g>
            <g fill="#4a4c4c"><use href="#corner" transform="matrix(-1 0 0 -1 1071 740)" /></g>
            <use href="#screw" x="333" y="168" /><use href="#screw" x="737" y="168" />
            <use href="#screw" x="333" y="573" /><use href="#screw" x="737" y="573" />
            <circle cx="535" cy="369.500" r="155" fill="url(#rim)" />
            <circle cx="535" cy="369.500" r="155" fill="none" stroke="#955" stroke-width=".6" stroke-dasharray="20 14 32 10" opacity=".7" />
            <circle cx="535" cy="370" r="150" fill="url(#disk)" stroke="#b87a7c" stroke-width="1" />
            <path class="pink" d="M370 594L535 524L701 594M690 370L727 280" />
            <path class="hint" d="M346 177L358 194M711 191L725 178M713 193L727 180M343 563L352 555M378 214l2 2M378 527l2-2M691 525l2 2M535 521v6M256 192v9M260 192v9" />
            <path d="M690 370H865" stroke="#8d161b" stroke-width=".8" opacity=".6" />
            <path d="M79 648V662H93" fill="none" stroke="#949494" stroke-width="1" />
            <text x="80" y="648" class="axis">y</text><text x="95" y="663" class="axis">x</text>
            <path d="M575 403.500V415.500L578 413L580 417.500L582 416.500L580 412.500H584Z" fill="#fff" stroke="#333" stroke-width=".6" />
          </svg>

          <div class="viewname"><button type="button">Top</button><button type="button" aria-label="View menu">▾</button></div>

          <section v-for="w in windows" :key="w.id" class="win" :class="w.id">
            <header>
              <h3><Glyph :name="w.glyph" />{{ w.title }}</h3>
              <span class="dots">•••</span><Glyph name="gear" /><button type="button" aria-label="Close">×</button>
            </header>
            <div class="tools">
              <button v-for="(t, i) in w.tools" :key="i" type="button" :aria-label="t" :class="{ lit: ['gsph', 'bsph', 'whale'].includes(t) }"><Glyph :name="t" /></button>
            </div>
          </section>
        </div>
        <nav class="views" aria-label="Views">
          <button v-for="(v, i) in views" :key="i" type="button" :class="{ on: i === 0 }">{{ v }}</button>
          <button type="button" aria-label="Add view">○</button>
        </nav>
      </section>

      <aside class="layers">
        <header><h2>Layers</h2><Glyph name="gear" /></header>
        <div class="lbody">
          <div class="lmain">
            <div class="ltools"><button v-for="t in layerTools" :key="t" type="button" :aria-label="t"><Glyph :name="t" /></button></div>
            <label class="search">
              <svg viewBox="0 0 10 10" aria-hidden="true"><circle cx="4" cy="4" r="3" /><path d="M6 6L9 9.500" /></svg>
              <input v-model="search" type="search" placeholder="Search" aria-label="Search">
            </label>
            <div class="list">
              <table>
                <colgroup><col class="c1"><col class="c2"><col class="c3"><col class="c3"><col class="c3"><col class="c4"><col class="c5"><col class="c6"></colgroup>
                <thead>
                  <tr><th>Layer</th><th>Current</th><th></th><th></th><th></th><th>Material</th><th>Linetype</th><th>Print Width</th></tr>
                </thead>
                <tbody>
                  <tr v-for="l in layers" :key="l.name" :class="{ current: l.current }">
                    <td class="name">{{ l.name }}</td>
                    <td class="tick"><template v-if="l.current">✓</template></td>
                    <td><Glyph v-if="!l.current" name="ybulb" /></td>
                    <td><Glyph v-if="!l.current" :name="l.locked ? 'block' : 'unlock'" /></td>
                    <td><i class="swatch" :class="l.color"></i></td>
                    <td><span class="mat"><i :class="{ solid: l.material }"></i>{{ l.material }}</span></td>
                    <td>Continuous</td>
                    <td><span class="pw"><i :class="l.color"></i>Default</span></td>
                  </tr>
                </tbody>
              </table>
              <div class="hscroll"></div>
            </div>
          </div>
          <nav class="strip" aria-label="Panels"><button v-for="t in sideTools" :key="t" type="button" :aria-label="t"><Glyph :name="t" /></button></nav>
        </div>
      </aside>
    </main>

    <footer class="status">
      <button type="button" class="edgebtn" aria-label="Left sidebar"><Glyph name="side" /></button>
      <span class="cplane">CPlane</span>
      <span class="coords">x 1559.425&nbsp; y -291.283&nbsp; z 0</span>
      <span class="units">Millimeters</span>
      <span class="cur"><i></i>Layer 05</span>
      <button type="button">Grid Snap</button>
      <button type="button" class="on">Ortho</button>
      <button type="button">Planar</button>
      <button type="button" class="on">Osnap</button>
      <button type="button">SmartTrack</button>
      <button type="button" class="on">Gumball (World)</button>
      <button type="button" class="auto"><Glyph name="olock" />Auto CPlane (Object)</button>
      <button type="button" class="rec">Record History</button>
      <button type="button" class="on">Filter</button>
      <span class="mem">Available physical memory: 48102 MB</span>
      <span class="grow"></span>
      <button type="button" class="edgebtn" aria-label="Right sidebar"><Glyph name="sideR" /></button>
    </footer>
  </div>
</template>

<style>
body { margin: 0; background: #000; }
.glyph { display: block; width: 13px; height: 13px; flex: none; overflow: visible; }
.glyph path { stroke-width: .8; stroke-linejoin: round; fill: none; stroke: none; }
.glyph .g-k { stroke: #44474c; }
.glyph .g-kd { stroke: #44474c; stroke-dasharray: 2 1; }
.glyph .g-h { stroke: #2b2d32; stroke-width: 1.2; }
.glyph .g-hd { stroke: #2b2d32; stroke-width: 1.5; stroke-dasharray: 2 1.5; }
.glyph .g-hk { stroke: #111; stroke-width: 1.7; }
.glyph .g-hb { stroke: #525c93; stroke-width: 1.2; }
.glyph .g-g { stroke: #8b8f94; }
.glyph .g-m { stroke: #cc3bc4; stroke-width: 1.2; }
.glyph .g-rh { stroke: #d5122b; stroke-width: 1.7; }
.glyph .g-rb { stroke: #a50f1c; stroke-width: 2.4; }
.glyph .g-wl { stroke: #fff; stroke-width: 1.3; }
.glyph .g-f { fill: #2b2d32; }
.glyph .g-more { fill: #5b5e62; }
.glyph .g-wf { fill: #fff; }
.glyph .g-w { fill: #fbfcfd; stroke: #4b4e54; }
.glyph .g-b { fill: #7e8ddf; stroke: #2b3368; }
.glyph .g-s { fill: #93a3ec; stroke: #38438a; }
.glyph .g-l { fill: #ccd4f8; stroke: #4e5892; }
.glyph .g-d { fill: #46549f; stroke: #1d2350; }
.glyph .g-dn { fill: #2947ad; stroke: #1b2c75; }
.glyph .g-gf { fill: #bfc2c5; stroke: #606367; }
.glyph .g-gd { fill: #4c4f54; stroke: #25272b; }
.glyph .g-gm { fill: #777a7f; stroke: #25272b; stroke-width: 1.2; }
.glyph .g-y { fill: #e8b024; stroke: #594105; }
.glyph .g-ya { fill: #f5c63c; }
.glyph .g-yb { fill: #ffe536; stroke: #ac941b; }
.glyph .g-yl { fill: #ecea7c; stroke: #494a38; }
.glyph .g-o { fill: #e7720c; stroke: #8a3d04; }
.glyph .g-r { fill: #e32c42; }
.glyph .g-rd { fill: #ca1f2d; stroke: #64131b; }
.glyph .g-n { fill: #35ae4d; }
.glyph .g-cy { fill: #23c8d5; }
.glyph .g-m2 { fill: #df36cb; }
.glyph .g-sg { fill: #a8b89c; stroke: #374033; }
.glyph .gt { font: 700 5px "Open Sans", sans-serif; text-anchor: middle; fill: #222; }
</style>

<style scoped>
.app { display: flex; flex-direction: column; box-sizing: border-box; min-height: 100vh; padding: 16px 0; background: #000; color: #2c3034; font: 6px/8px Roboto, "Open Sans", sans-serif; text-rendering: geometricPrecision; }
.app *, .app *::before { box-sizing: border-box; }
button, input { font: inherit; color: inherit; background: none; border: 0; padding: 0; margin: 0; outline: 0; white-space: nowrap; text-rendering: inherit; }
h2, h3, p { margin: 0; font: inherit; }
.grow { flex: 1; }
.menubar { display: flex; gap: 7px; height: 11px; padding: 0 3px; background: #e7eaec; }
.command { height: 29px; display: flex; flex-direction: column; background: #fff; border-left: 2px dotted #d5d7d9; padding-left: 4px; }
.log { height: 19px; display: flex; flex-direction: column; justify-content: flex-end; overflow: hidden; white-space: nowrap; }
.log p { flex: none; }
.prompt { display: flex; flex: 1; align-items: center; border-top: 1px solid #dadddf; font-weight: 700; color: #111; }
.prompt input { flex: 1; height: 8px; }
.spin { font-size: 4px; line-height: 4px; padding-right: 2px; color: #74787c; }
.tabs { display: flex; height: 11px; padding: 0 0 0 6px; background: #d7dbde; color: #6a6e72; align-items: stretch; }
.tabs button { padding: 2px 5px 0; }
.tabs .on { background: #e8ecee; color: #303438; }
.tabs .glyph { width: 8px; height: 8px; margin: 2px 2px 0; }
.actions { display: flex; align-items: center; height: 18px; padding: 0 7px 3px; background: #e7ebee; border-bottom: 1px solid #c9ced1; }
.actions button { display: flex; align-items: center; gap: 2px; padding-right: 4px; }
.actions .sep { border-right: 1px solid #c5c9cc; margin-right: 2px; }
.actions .glyph { width: 11px; height: 11px; }
.work { flex: 1; display: flex; min-height: 0; background: #e7ebee; }

.left { width: 61px; flex: none; display: flex; flex-direction: column; background: #e8edf0; border-right: 2px solid #d6dadd; }
.grip { height: 5px; text-align: center; color: #9aa0a4; font-size: 5px; line-height: 5px; }
.palette { display: grid; grid-template-columns: repeat(4, 14px); grid-auto-rows: 14px; min-height: 299px; align-content: start; }
.palette button, .tools button { display: grid; place-items: center; }
.filters header { display: flex; justify-content: space-between; align-items: center; height: 9px; border-top: 1px solid #cfd3d6; padding: 0 2px; color: #62676b; white-space: nowrap; }
.filters header .glyph { width: 7px; height: 7px; }
.ftabs { display: flex; height: 11px; background: #d7dbde; }
.ftabs button { width: 18px; display: grid; place-items: center; }
.ftabs .on { background: #e8edf0; }
.ftabs .glyph { width: 9px; height: 9px; }
.flist { display: grid; grid-template-rows: repeat(14, 1fr); height: 122px; margin-top: 2px; }
.filters label { display: flex; align-items: center; gap: 3px; padding-left: 2px; white-space: nowrap; line-height: 8px; }
.filters .disable { margin-top: 9px; }
.filters input { appearance: none; width: 7px; height: 7px; background: #fff; border: 1px solid #dfe3e6; display: grid; place-items: center; }
.filters input:checked::before { content: ""; width: 6px; height: 6px; background: #1b1d1f; clip-path: polygon(0 50%, 17% 36%, 38% 62%, 84% 0, 100% 14%, 40% 100%); }

.center { flex: 1; min-width: 0; display: flex; flex-direction: column; }
.viewport { position: relative; flex: 1; overflow: hidden; margin-top: 1px; border-bottom: 1px solid #b5babd; background: #555; }
.scene { position: absolute; inset: 0; width: 100%; height: 100%; }
.seam { fill: none; stroke: #2d0003; stroke-width: 1; }
.crease { fill: none; stroke: #220001; stroke-width: 1.5; opacity: .7; }
.edge { stroke: #804346; stroke-width: 1; }
.pink { fill: none; stroke: #b98083; stroke-width: .9; }
.hint { fill: none; stroke: #ae7b7d; stroke-width: .7; }
.axis { fill: #a0a0a0; font: 7px "Noto Sans", sans-serif; }
.viewname { position: absolute; left: 0; top: 0; display: flex; background: #6b98f2; color: #101f4c; height: 9px; }
.viewname button { padding: 0 4px 0 3px; font-size: 7px; line-height: 9px; }
.viewname button + button { border-left: 1px solid #3c66bd; padding: 0 1px; width: 6px; font-size: 6px; }
.win { position: absolute; display: flex; flex-direction: column; background: #e9edf0; border: 1px solid #c5c9cc; border-radius: 3px; box-shadow: 1px 3px 9px rgb(0 0 0 / 40%); overflow: hidden; }
.win header { display: flex; align-items: center; gap: 4px; height: 10px; background: #d6dadd; color: #93999d; flex: none; padding-right: 2px; }
.win h3 { display: flex; align-items: center; gap: 3px; height: 10px; padding: 0 5px 0 6px; background: #e9edf0; color: #45494d; white-space: nowrap; }
.win header .glyph { width: 8px; height: 8px; }
.dots { margin-left: auto; font-size: 5px; }
.win header > .glyph { width: 7px; height: 7px; opacity: .7; }
.tools { display: grid; grid-template-columns: repeat(auto-fill, 14px); grid-auto-rows: 14px; margin-top: -1px; }
.tools .lit { background: #d0d5e4; }
.curve-tools { left: 38px; top: 4px; width: 159px; height: 68px; }
.curve { left: 44px; top: 92px; width: 78px; height: 71px; }
.surface-creation { left: 131px; top: 132px; width: 92px; height: 85px; }
.solid-tools { left: 88px; top: 233px; width: 106px; height: 99px; }
.surface-tools { left: 90px; top: 343px; width: 106px; height: 113px; }
.popup { left: 511px; top: 111px; width: 272px; height: 81px; }
.surface-tools .tools, .solid-tools .tools, .surface-creation .tools { padding-left: 1px; }
.surface-creation header { gap: 2px; }
.surface-creation h3 { padding: 0 2px 0 5px; }
.views { height: 11px; display: flex; background: #d8dce0; color: #6c7175; padding-left: 1px; border-top: 1px solid #eff2f3; }
.views button { padding: 0 4px; border-right: 1px solid #c5c9a8; }
.views .on { background: #eff2f4; color: #333; }
.views button:nth-child(n+4) { border: 0; }

.layers { width: 214px; flex: none; display: flex; flex-direction: column; border-left: 2px solid #dfe3e6; background: #e7ebee; }
.layers > header { display: flex; justify-content: space-between; align-items: center; height: 12px; padding: 0 2px; border-bottom: 1px solid #cfd3d6; color: #63686c; }
.layers > header .glyph { width: 7px; height: 7px; }
.lbody { flex: 1; display: flex; min-height: 0; }
.lmain { flex: 1; min-width: 0; display: flex; flex-direction: column; }
.ltools { display: flex; height: 14px; align-items: center; padding-left: 1px; gap: 2px; }
.ltools .glyph { width: 9px; height: 9px; }
.search { display: flex; align-items: center; height: 12px; margin: 0 1px; background: #fff; border: 1px solid #b3b8bc; border-radius: 6px; padding: 0 2px; gap: 2px; }
.search svg { width: 7px; height: 7px; fill: none; stroke: #3e4246; stroke-width: 1.2; }
.search input { flex: 1; min-width: 0; height: 10px; }
.search input::placeholder { color: #777c80; }
.list { position: relative; flex: 1; margin-top: 3px; background: #fff; overflow: hidden; display: flex; flex-direction: column; justify-content: space-between; }
table { border-collapse: collapse; table-layout: fixed; width: 240px; color: #484d51; }
.c1 { width: 44px; } .c2 { width: 17px; } .c3 { width: 10px; } .c4 { width: 39px; } .c5 { width: 42px; } .c6 { width: 68px; }
th { height: 12px; text-align: left; font-weight: 400; padding: 0 1px; overflow: hidden; white-space: nowrap; background: #fcfdfd; }
th:nth-child(n+6) { padding-left: 3px; }
th:nth-child(8) { padding-left: 12px; }
td { height: 10px; padding: 0 1px; overflow: hidden; white-space: nowrap; }
td .glyph { width: 9px; height: 9px; }
.name { padding-left: 8px; }
.tick { padding-left: 5px; }
.current { background: #7cc0f2; color: #14334b; font-weight: 700; }
.swatch { display: block; width: 7px; height: 8px; border: 1px solid #111; }
.red { background: #dc0712; } .black { background: #070707; }
.mat, .pw { display: flex; align-items: center; gap: 2px; }
.mat i { width: 7px; height: 7px; border: 1px solid #999; border-radius: 50%; background: #fff; }
.mat .solid { background: #287d3d; border-color: #1b5f2c; }
.pw { gap: 3px; }
.pw i { width: 5px; height: 5px; transform: rotate(45deg); margin-left: 1px; }
.hscroll { width: 135px; height: 4px; margin: 0 0 3px 3px; border-radius: 2px; background: #bec2c3; }
.strip { width: 12px; display: flex; flex-direction: column; background: #d5dadd; gap: 4px; }
.strip button { height: 14px; display: grid; place-items: center; }
.strip button:first-child { background: #eef1f3; }
.strip .glyph { width: 9px; height: 9px; }

.status { height: 12px; display: flex; align-items: center; padding: 0 2px; background: #e8ecef; border-bottom: 1px solid #4d6178; white-space: nowrap; color: #44484c; }
.status button { padding: 0 3px; margin-right: 4px; height: 9px; }
.status .edgebtn { padding: 0; margin: 0 8px 0 0; width: 10px; }
.status .edgebtn:last-child { margin: 0; }
.status .glyph { width: 8px; height: 8px; }
.status .on { background: #d3d9ee; color: #141a36; font-weight: 700; }
.cplane { width: 57px; }
.coords { width: 109px; }
.units { width: 42px; }
.cur { display: flex; align-items: center; gap: 3px; width: 96px; }
.cur i { width: 8px; height: 8px; background: #dc0712; border: 1px solid #6b1116; }
.status .auto { display: flex; align-items: center; gap: 4px; }
.status .rec { margin-left: 2px; }
.status .mem { margin-left: 2px; }
</style>
